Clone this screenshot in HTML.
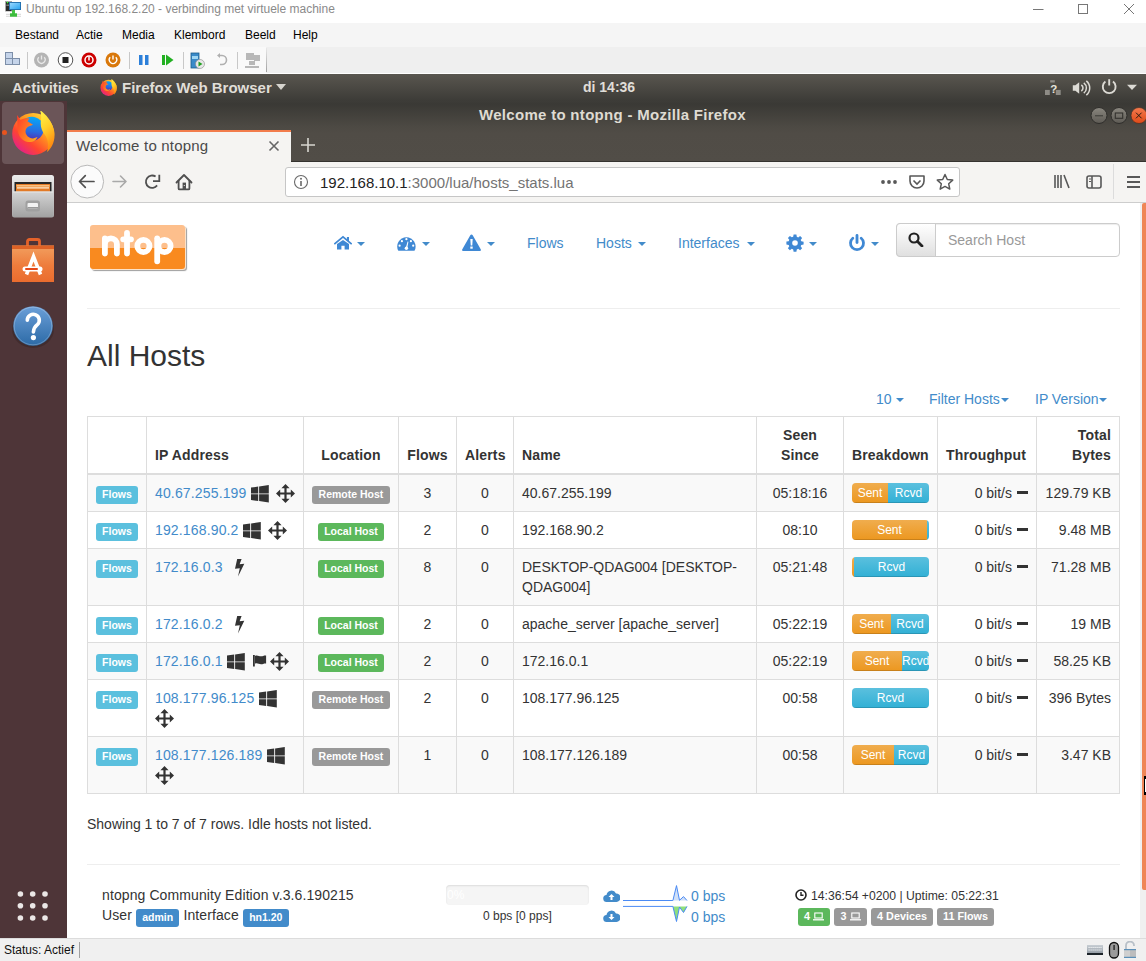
<!DOCTYPE html>
<html><head><meta charset="utf-8">
<style>
*{box-sizing:border-box;margin:0;padding:0}
html,body{width:1146px;height:961px;overflow:hidden;background:#fff;font-family:"Liberation Sans",sans-serif;position:relative}
.a{position:absolute}
.menu{top:28px;font-size:12px;line-height:15px;color:#000;white-space:nowrap}
.ub{font-size:15px;font-weight:bold;line-height:17px;color:#e0ded8;white-space:nowrap}
.lnk{font-size:14px;line-height:20px;color:#428bca;white-space:nowrap}
.nc path{fill:#428bca}
.hl{height:1px;background:#ddd}
.vl{width:1px;background:#ddd}
.td{padding:8px;font-size:14px;line-height:20px;color:#333;white-space:nowrap}
.thb{position:absolute;bottom:8px;left:8px;right:8px;letter-spacing:.15px}
.ip{color:#428bca;letter-spacing:.15px}
.ic{vertical-align:-3px}
.flw{display:inline-block;margin-top:3px;margin-left:0;width:42px;height:18px;line-height:17px;padding-bottom:1px;border-radius:3px;background:#5bc0de;color:#fff;font-weight:bold;font-size:10.5px;text-align:center;vertical-align:top}
.lbl{display:inline-block;margin-top:3px;height:18px;line-height:17px;padding-bottom:1px!important;padding:0 6.3px;border-radius:3px;color:#fff;font-weight:bold;font-size:10.5px;vertical-align:top}
.bar{position:absolute;left:8px;top:8px;width:77px;height:20px;border-radius:4px;overflow:hidden;display:flex;background:#f5f5f5}
.seg{height:20px;line-height:20px;font-size:12px;color:#fff;text-align:center;overflow:hidden;box-shadow:inset 0 -1px 0 rgba(0,0,0,.15)}
.sent{background:linear-gradient(#f0ad4e,#ec971f)}
.rcvd{background:linear-gradient(#5bc0de,#31b0d5)}
.minus{display:inline-block;width:11px;height:3px;background:#333;margin-left:5px;vertical-align:4px}
.ft{font-size:14px;line-height:20px;color:#333;white-space:nowrap;letter-spacing:.1px}
.bdg{display:inline-block;height:18px;line-height:16px;padding-bottom:2px!important;padding:0 6.3px;border-radius:3px;color:#fff;font-weight:bold;font-size:10.5px;vertical-align:-1px;letter-spacing:0}
.bdg2{height:18px;line-height:16px;border-radius:3px;color:#fff;font-weight:bold;font-size:10.8px;text-align:center;white-space:nowrap}

</style></head><body>
<!-- Hyper-V title -->
<div class="a" style="left:0;top:0;width:1146px;height:23px;background:#fff"></div>
<svg class="a" style="left:0;top:0" width="24" height="22" viewBox="0 0 24 22">
 <defs><linearGradient id="hvm" x1="0" y1="0" x2="1" y2="1"><stop offset="0" stop-color="#9ad8ff"/><stop offset="1" stop-color="#2aa4f0"/></linearGradient></defs>
 <rect x="5" y="1" width="7" height="10.5" fill="#a8a8a8"/><rect x="6" y="2" width="5.5" height="9" fill="#2c2c2c"/><rect x="6.3" y="4.5" width="4" height="1.5" fill="#777"/><circle cx="7.5" cy="2.6" r=".8" fill="#3f3"/>
 <rect x="9" y="2" width="12" height="8" fill="#1f6cab"/><rect x="9.9" y="2.9" width="10.2" height="6.2" fill="url(#hvm)"/>
 <rect x="6" y="13.8" width="15" height=".9" fill="#d0d0d0"/><rect x="6" y="15.8" width="15" height=".9" fill="#d0d0d0"/>
 <rect x="12" y="10" width="3" height="4" fill="#44c444"/><rect x="10" y="13.3" width="7" height="3.4" fill="#3cbc3c"/>
</svg>
<div class="a" style="left:26px;top:2px;font-size:12px;color:#8a8a8a;line-height:15px;white-space:nowrap">Ubuntu op 192.168.2.20 - verbinding met virtuele machine</div>
<svg class="a" style="left:1020px;top:0" width="126" height="22" viewBox="0 0 126 22">
 <path d="M13 9.5H23.5" stroke="#777" stroke-width="1"/>
 <rect x="58.5" y="4.5" width="9" height="9" fill="none" stroke="#777"/>
 <path d="M104 4L114 14M114 4L104 14" stroke="#777" stroke-width="1"/>
</svg>
<!-- menu -->
<div class="a" style="left:0;top:23px;width:1146px;height:24px;background:#f5f5f5"></div>
<div class="a menu" style="left:15px">Bestand</div>
<div class="a menu" style="left:76px">Actie</div>
<div class="a menu" style="left:122px">Media</div>
<div class="a menu" style="left:174px">Klembord</div>
<div class="a menu" style="left:245px">Beeld</div>
<div class="a menu" style="left:293px">Help</div>
<!-- toolbar -->
<div class="a" style="left:0;top:47px;width:1146px;height:27px;background:#efefef;border-bottom:1px solid #fff"></div>
<div class="a" style="left:0;top:47px;width:266px;height:26px;background:#f9f9f9"></div>
<div class="a" style="left:266px;top:48px;width:1px;height:24px;background:linear-gradient(#e8e8e8,#a0a0a0)"></div>
<svg class="a" style="left:0;top:47px" width="267" height="26" viewBox="0 0 267 26">
 <g fill="#c5d4ea" stroke="#7c8ea8" stroke-width="1">
  <rect x="5.5" y="5.5" width="7" height="6"/><rect x="5.5" y="11.5" width="7" height="6"/><rect x="12.5" y="11.5" width="7" height="6"/>
 </g>
 <path d="M27.5 5v17M129.5 5v17M183.5 5v17M237.5 5v17" stroke="#c8c8c8"/>
 <circle cx="41.5" cy="13" r="7.5" fill="#b4b4b4"/><path d="M41.5 8.5v4" stroke="#e8e8e8" stroke-width="1.3"/><path d="M38.8 10.3a3.6 3.6 0 1 0 5.4 0" fill="none" stroke="#e8e8e8" stroke-width="1.3"/>
 <circle cx="65.5" cy="13" r="7.3" fill="#fff" stroke="#555" stroke-width="1"/><rect x="62.5" y="10" width="6" height="6" fill="#222"/>
 <circle cx="89" cy="13" r="7.5" fill="#c00"/><circle cx="89" cy="13" r="4" fill="none" stroke="#fff" stroke-width="1.5"/><path d="M89 9.5v4" stroke="#fff" stroke-width="1.5"/>
 <circle cx="113" cy="13" r="7.5" fill="#d9780b"/><path d="M113 8.5v4" stroke="#fff" stroke-width="1.4"/><path d="M110.2 10.3a3.7 3.7 0 1 0 5.6 0" fill="none" stroke="#fff" stroke-width="1.4"/>
 <rect x="139" y="8" width="3.5" height="10" fill="#2b7fd9"/><rect x="145" y="8" width="3.5" height="10" fill="#2b7fd9"/>
 <rect x="162" y="8" width="3" height="10" fill="#22b022"/><path d="M166 7.5l7.5 5.5-7.5 5.5z" fill="#22b022"/>
 <rect x="191" y="6" width="8" height="15" fill="#3a8ac8" stroke="#1c5c8c" stroke-width=".8"/><rect x="192" y="9" width="6" height="3" fill="#9fd6f3"/><circle cx="200" cy="17" r="4.5" fill="#e8e8e8" stroke="#888" stroke-width=".6"/><path d="M198.5 14.5l4 2.5-4 2.5z" fill="#22a022"/>
 <path d="M219 8.5h3a4 4 0 0 1 0 9h-2" fill="none" stroke="#b0b0b0" stroke-width="1.6"/><path d="M217 8.5l3-2.5v5z" fill="#b0b0b0"/>
 <g fill="#b8b8b8"><rect x="246" y="6" width="8" height="7"/><rect x="254" y="8" width="6" height="6"/><rect x="249" y="14" width="6" height="4"/><rect x="245" y="19" width="14" height="2"/></g>
</svg>
<!-- ubuntu top bar -->
<div class="a" style="left:0;top:74px;width:1146px;height:27px;background:linear-gradient(#59564f,#3c3b37)"></div>
<div class="a ub" style="left:12px;top:79px">Activities</div>
<svg class="a" style="left:100px;top:79px" width="17" height="17" viewBox="0 0 44 44"><use href="#ffx"/></svg>
<div class="a ub" style="left:122px;top:79px">Firefox Web Browser</div>
<svg class="a" style="left:276px;top:84px" width="10" height="6"><path d="M0 0h10l-5 6z" fill="#d6d4ce"/></svg>
<div class="a ub" style="left:583px;top:79px;font-size:14px">di 14:36</div>
<svg class="a" style="left:1040px;top:77px" width="106" height="20" viewBox="0 0 106 20">
 <g fill="#8e8c86"><rect x="5" y="12.9" width="4.8" height="5.1"/><rect x="15.8" y="12.9" width="4.9" height="5.1"/><rect x="10.2" y="3.2" width="4.6" height="2.3"/></g>
 <text x="10.3" y="15.6" font-family="Liberation Sans" font-weight="bold" font-size="11.5" fill="#e6e4de">?</text>
 <path d="M32.8 8.3h2.6l3.8-3v11.4l-3.8-3h-2.6z" fill="#dcdad4"/><path d="M41.3 8a3.5 3.5 0 0 1 0 6M43.8 5.8a6.5 6.5 0 0 1 0 10.4M46.3 3.8a9.3 9.3 0 0 1 0 14.4" fill="none" stroke="#dcdad4" stroke-width="1.5"/>
 <path d="M69.2 2.2v6.3" stroke="#dcdad4" stroke-width="1.9"/><path d="M65.4 4.6a6.4 6.4 0 1 0 7.6 0" fill="none" stroke="#dcdad4" stroke-width="1.9"/>
 <path d="M87 7.8h10l-5 5.1z" fill="#dcdad4"/>
</svg>
<!-- firefox title -->
<div class="a" style="left:67px;top:101px;width:1079px;height:61px;background:linear-gradient(#3d3c38 0,#3a3935 3px,#4c4943 25px,#504c46 32px,#514d47 61px)"></div>
<div class="a" style="left:291px;top:161px;width:855px;height:1px;background:#35332f"></div>
<div class="a ub" style="left:479px;top:106px;color:#dfdbd2;letter-spacing:.3px">Welcome to ntopng - Mozilla Firefox</div>
<svg class="a" style="left:1085px;top:104px" width="61" height="22" viewBox="0 0 61 22">
 <defs><linearGradient id="gb" x1="0" y1="0" x2="0" y2="1"><stop offset="0" stop-color="#8a877f"/><stop offset="1" stop-color="#5d5a54"/></linearGradient>
 <linearGradient id="go" x1="0" y1="0" x2="0" y2="1"><stop offset="0" stop-color="#f47a4e"/><stop offset="1" stop-color="#de4a18"/></linearGradient></defs>
 <circle cx="14" cy="11.5" r="8" fill="url(#gb)" stroke="#2e2d2a" stroke-width="1"/><path d="M10 11.8h8" stroke="#3a3935" stroke-width="1"/>
 <circle cx="34" cy="11.5" r="8" fill="url(#gb)" stroke="#2e2d2a" stroke-width="1"/><rect x="30.3" y="9" width="7.4" height="5.3" fill="none" stroke="#33322e" stroke-width="1.1"/>
 <circle cx="54" cy="11.5" r="8" fill="url(#go)" stroke="#3a2a20" stroke-width=".6"/><path d="M51 8.7l5.6 5.6M56.6 8.7l-5.6 5.6" stroke="#2a1a10" stroke-width="1"/>
</svg>
<!-- tab -->
<div class="a" style="left:67px;top:130px;width:224px;height:33px;background:#f5f4f2;border-top:2px solid #f27c4b"></div>
<div class="a" style="left:76px;top:137px;font-size:15px;line-height:17px;color:#4a4a4a;letter-spacing:.2px;white-space:nowrap">Welcome to ntopng</div>
<svg class="a" style="left:268px;top:140px" width="12" height="12"><path d="M1.5 1.5l9 9M10.5 1.5l-9 9" stroke="#666" stroke-width="1.6"/></svg>
<svg class="a" style="left:300px;top:137px" width="16" height="16"><path d="M8 1v14M1 8h14" stroke="#d8d6d0" stroke-width="1.6"/></svg>
<!-- navbar -->
<div class="a" style="left:67px;top:162px;width:1079px;height:41px;background:#f5f4f2;border-bottom:1px solid #cdcdcd"></div>
<svg class="a" style="left:67px;top:162px" width="1079" height="40" viewBox="0 0 1079 40">
 <circle cx="20.2" cy="19.6" r="16.4" fill="#fbfbfb" stroke="#b9b9b9"/>
 <path d="M12.5 19.5h14.5M12.5 19.5l5.8-5.8M12.5 19.5l5.8 5.8" fill="none" stroke="#505050" stroke-width="1.7" stroke-linecap="round"/>
 <path d="M46 19.5h13M59 19.5l-5.5-5.5M59 19.5l-5.5 5.5" fill="none" stroke="#a9a9a9" stroke-width="1.6" stroke-linecap="round"/>
 <path d="M90.1 23.4A6.2 6.2 0 1 1 88.6 14.6" fill="none" stroke="#4f4f4f" stroke-width="1.8"/><path d="M92.3 12.8v6.3h-6.3" fill="none" stroke="#4f4f4f" stroke-width="1.8"/>
 <path d="M109.5 20.5L117 13L124.5 20.5" fill="none" stroke="#4f4f4f" stroke-width="1.8" stroke-linecap="round" stroke-linejoin="round"/><path d="M111.6 18.5V26.4a1 1 0 0 0 1 1h8.8a1 1 0 0 0 1-1V18.5" fill="none" stroke="#4f4f4f" stroke-width="1.8"/><rect x="115.6" y="20.6" width="3.4" height="6.8" fill="#4f4f4f"/><circle cx="117.3" cy="23.5" r=".6" fill="#f5f4f2"/>
</svg>
<div class="a" style="left:285px;top:167px;width:675px;height:30px;background:#fff;border:1px solid #c6c6c6;border-radius:3px"></div>
<svg class="a" style="left:293px;top:174px" width="16" height="16"><circle cx="8" cy="8" r="6.5" fill="none" stroke="#6a6a6a" stroke-width="1.1"/><rect x="7.2" y="7" width="1.6" height="5" fill="#6a6a6a"/><circle cx="8" cy="4.8" r="1" fill="#6a6a6a"/></svg>
<div class="a" style="left:320px;top:174px;font-size:15px;line-height:17px;color:#737373;white-space:nowrap"><span style="color:#222">192.168.10.1</span>:3000/lua/hosts_stats.lua</div>
<svg class="a" style="left:878px;top:172px" width="80" height="20" viewBox="0 0 80 20">
 <circle cx="5" cy="10" r="1.9" fill="#585858"/><circle cx="11" cy="10" r="1.9" fill="#585858"/><circle cx="17" cy="10" r="1.9" fill="#585858"/>
 <path d="M32 4h14v5a7 7 0 0 1-14 0z" fill="none" stroke="#585858" stroke-width="1.6" stroke-linejoin="round"/><path d="M35.5 8.5l3.5 3.5 3.5-3.5" fill="none" stroke="#585858" stroke-width="1.6"/>
 <path d="M67 2.5l2.3 5 5.4.6-4 3.7 1.1 5.3-4.8-2.7-4.8 2.7 1.1-5.3-4-3.7 5.4-.6z" fill="none" stroke="#585858" stroke-width="1.5" stroke-linejoin="round"/>
</svg>
<svg class="a" style="left:1052px;top:172px" width="94" height="20" viewBox="0 0 94 20">
 <path d="M3 3v13M6 3v13M9 3v13M12 3l5 13" stroke="#585858" stroke-width="1.6"/>
 <rect x="35" y="4" width="14" height="12" rx="2" fill="none" stroke="#585858" stroke-width="1.6"/><path d="M40 4v12" stroke="#585858" stroke-width="1.6"/><path d="M37 7h2M37 9.5h2" stroke="#585858" stroke-width="1"/>
 <path d="M75 5h13M75 10h13M75 15h13" stroke="#585858" stroke-width="1.8"/>
</svg>
<div class="a" style="left:1113px;top:164px;width:1px;height:35px;background:#dcdcdc"></div>

<svg width="0" height="0" style="position:absolute">
 <defs>
  <linearGradient id="ffo" x1="0.85" y1="0.1" x2="0.15" y2="0.9"><stop offset="0" stop-color="#ffd83a"/><stop offset="0.35" stop-color="#ff9a1e"/><stop offset="0.7" stop-color="#ff4530"/><stop offset="1" stop-color="#e3208a"/></linearGradient>
  <linearGradient id="ffb" x1="0.5" y1="0" x2="0.4" y2="1"><stop offset="0" stop-color="#05a9f8"/><stop offset="0.6" stop-color="#2a6ce0"/><stop offset="1" stop-color="#5528b0"/></linearGradient>
  <linearGradient id="ffy" x1="0" y1="0" x2="0.3" y2="1"><stop offset="0" stop-color="#fff44a"/><stop offset="0.5" stop-color="#ffd02a"/><stop offset="1" stop-color="#ff8a10"/></linearGradient>
  <linearGradient id="ffr" x1="0" y1="0" x2="1" y2="0.6"><stop offset="0" stop-color="#ff3a2a"/><stop offset="1" stop-color="#ffa020"/></linearGradient>
  <symbol id="ffx" viewBox="0 0 44 44">
   <circle cx="22.2" cy="22.9" r="21" fill="url(#ffo)"/>
   <circle cx="20.8" cy="17.8" r="12" fill="url(#ffb)"/>
   <path d="M6 4L9.5 9C12 7.5 15 7 18.5 7.5L16.5 10.2L22 13.7L17 15.8C15.5 17 14.5 18.5 14.5 20.5C14.5 24 17.5 27 22 27.5L26.5 26C25.5 29.5 21.5 31.5 17 31C11 30 7 25 6.5 18C6.3 12 6.5 8 6 4Z" fill="url(#ffr)"/>
   <path d="M29 -1C34 3 40 8 43 19C45 29 41 37 36 41C38 34 37 28 34 24C30.5 20 29 14 30 9C30.5 5 30 2 29 -1Z" fill="url(#ffy)"/>
  </symbol>
 </defs>
</svg>
<div class="a" style="left:0;top:101px;width:67px;height:837px;background:#4e3538"></div>
<div class="a" style="left:2px;top:102px;width:62px;height:62px;background:#6b5558;border-radius:4px"></div>
<div class="a" style="left:2px;top:130px;width:5px;height:5px;border-radius:50%;background:#e9541e"></div>
<svg class="a" style="left:11px;top:111px" width="44" height="44" viewBox="0 0 44 44"><use href="#ffx"/></svg>
<svg class="a" style="left:11px;top:174px" width="44" height="46" viewBox="0 0 44 46">
 <defs><linearGradient id="fc" x1="0" y1="0" x2="0" y2="1"><stop offset="0" stop-color="#ececec"/><stop offset="1" stop-color="#a8a8a8"/></linearGradient>
 <linearGradient id="fd" x1="0" y1="0" x2="0" y2="1"><stop offset="0" stop-color="#d4d4d4"/><stop offset="1" stop-color="#a2a2a2"/></linearGradient></defs>
 <rect x="1" y="1" width="42" height="42.5" rx="2.5" fill="url(#fc)"/>
 <rect x="3.5" y="8" width="37" height="10" fill="#262626"/>
 <rect x="5" y="10" width="34" height="8" fill="#e27a26"/><rect x="5.5" y="11" width="33" height="1.6" fill="#f8c080"/><rect x="6" y="13.3" width="32" height="1.2" fill="#fff4dc"/>
 <rect x="2" y="17.5" width="40" height="25.5" rx="1" fill="url(#fd)"/><rect x="2" y="17.5" width="40" height="1" fill="#e6e6e6"/>
 <rect x="14.5" y="26.5" width="14.5" height="11" rx="2.5" fill="#a0a0a0"/><rect x="16.5" y="29" width="10.5" height="5.5" rx="1" fill="#f2f2f2"/><rect x="16.5" y="33" width="10.5" height="1.5" fill="#999"/>
</svg>
<svg class="a" style="left:11px;top:238px" width="44" height="46" viewBox="0 0 44 46">
 <defs><linearGradient id="bg1" x1="0" y1="0" x2="0" y2="1"><stop offset="0" stop-color="#f2a060"/><stop offset="0.55" stop-color="#ee7c3c"/><stop offset="1" stop-color="#ea6c2e"/></linearGradient></defs>
 <path d="M16.5 12V3.5a2 2 0 0 1 2-2h8a2 2 0 0 1 2 2V12" fill="none" stroke="#e4622a" stroke-width="2.8"/>
 <rect x="1" y="7.5" width="42" height="36.5" fill="url(#bg1)"/>
 <rect x="1" y="7.5" width="42" height="3.5" fill="#dd6226"/>
 <path d="M15.5 36.5L22.5 18.5L29.5 36.5" fill="none" stroke="#fff" stroke-width="3.6" stroke-linejoin="miter"/>
 <rect x="11.5" y="28.5" width="20" height="5" rx="2.5" fill="#fff"/><rect x="14" y="30" width="13" height="2" rx="1" fill="#e64a1a"/>
</svg>
<svg class="a" style="left:10px;top:302px" width="46" height="50" viewBox="0 0 46 50">
 <defs><linearGradient id="hg" x1="0" y1="0" x2="0" y2="1"><stop offset="0" stop-color="#6b9fd8"/><stop offset="1" stop-color="#2c6aa6"/></linearGradient></defs>
 <ellipse cx="23" cy="27" rx="21" ry="19" fill="#2a1c1e" opacity=".35"/>
 <circle cx="23" cy="24" r="19.8" fill="url(#hg)"/>
 <circle cx="23" cy="24" r="18.8" fill="none" stroke="#fff" stroke-opacity=".3" stroke-width=".8"/>
 <path d="M17.3 18.2A6 5.9 0 1 1 27.3 22.6C24.9 24.5 23.6 26 23.4 30" fill="none" stroke="#fff" stroke-width="3.6" stroke-linecap="round"/>
 <circle cx="23.4" cy="35.6" r="2.6" fill="#fff"/>
</svg>
<svg class="a" style="left:17px;top:891px" width="32" height="32" viewBox="0 0 32 32"><g fill="#ebe7e6"><circle cx="3.4" cy="3" r="2.8"/><circle cx="15.7" cy="3" r="2.8"/><circle cx="28" cy="3" r="2.8"/><circle cx="3.4" cy="14.8" r="2.8"/><circle cx="15.7" cy="14.8" r="2.8"/><circle cx="28" cy="14.8" r="2.8"/><circle cx="3.4" cy="27" r="2.8"/><circle cx="15.7" cy="27" r="2.8"/><circle cx="28" cy="27" r="2.8"/></g></svg>
<!-- status bar -->
<div class="a" style="left:0;top:938px;width:1146px;height:23px;background:#f0f0f0;border-top:1px solid #dcdcdc"></div>
<div class="a" style="left:4px;top:943px;font-size:12px;color:#111;white-space:nowrap">Status: Actief</div>
<div class="a" style="left:79px;top:942px;width:1px;height:16px;background:#a0a0a0"></div>
<svg class="a" style="left:1085px;top:941px" width="61" height="18" viewBox="0 0 61 18">
 <defs><linearGradient id="kb" x1="0" y1="0" x2="0" y2="1"><stop offset="0" stop-color="#c8ced4"/><stop offset="1" stop-color="#8a939c"/></linearGradient></defs>
 <rect x="2" y="4" width="16" height="10" fill="url(#kb)"/><rect x="2" y="12" width="16" height="2" fill="#1c2328"/>
 <path d="M3.5 6.5h13M3.5 9h13" stroke="#f4f6f8" stroke-width="1" stroke-dasharray="1.2 .8"/>
 <rect x="24.5" y="1.5" width="9" height="15.5" rx="4.5" fill="#9a9a9a" stroke="#111" stroke-width="1.3"/><rect x="28.3" y="4" width="1.6" height="5" fill="#333"/>
 <path d="M41 8V4.5a4 4 0 0 1 8 0V5" fill="none" stroke="#b8c0c8" stroke-width="1.8"/>
 <rect x="39" y="8.5" width="12" height="8" fill="#cfcfcf"/><rect x="45" y="8.5" width="6" height="8" fill="#bdbdbd"/><rect x="39" y="8" width="12" height="1.2" fill="#5b8fb8"/><rect x="39" y="15.8" width="12" height="1.2" fill="#5b8fb8"/>
</svg>

<!-- content bg -->
<div class="a" style="left:67px;top:203px;width:1079px;height:735px;background:#fff"></div>
<div class="a" style="left:1140px;top:203px;width:6px;height:735px;background:#f0f0f0"></div>
<div class="a" style="left:1142px;top:203px;width:4px;height:687px;background:#ef8656;border-radius:2px 0 0 2px"></div>
<!-- ntop logo -->
<div class="a" style="left:90px;top:225px;width:95px;height:44px;border-radius:3px;background:linear-gradient(#fdbf8c 0,#fdbf8c 23px,#f98a1f 23px,#f98a1f);box-shadow:1px 1px 0 #fce2c8,2px 2px 1px rgba(60,60,60,.5)"></div>
<svg class="a" style="left:100px;top:228px" width="78" height="38" viewBox="0 0 78 38">
 <g fill="none" stroke="#fff" stroke-width="5.8" stroke-linecap="round" stroke-linejoin="round">
  <path d="M4.9 10.3V25.5M4.9 16.3A6 6 0 0 1 16.9 16.3V25.5"/>
  <path d="M27 4.9V25.5M23.2 11.3H31"/>
  <circle cx="43.4" cy="18" r="6.1"/>
  <path d="M57.2 10.3V33.3"/><circle cx="64.5" cy="18" r="6.1"/>
 </g>
</svg>
<!-- nav -->
<svg class="a" style="left:334px;top:235px" width="18" height="16" viewBox="0 0 18 16"><path d="M0.9 8.6L9 1.9L17.1 8.6" fill="none" stroke="#3f88d4" stroke-width="1.8" stroke-linecap="round"/><rect x="12.9" y="2" width="2.1" height="4" fill="#3f88d4"/><path d="M3 9L9 4.9L15 9V14.6H10.6V10.8H7.4V14.6H3Z" fill="#3f88d4"/></svg>
<svg class="a nc" style="left:357px;top:242px" width="8" height="4"><path d="M0 0h8l-4 4z"/></svg>
<svg class="a" style="left:397px;top:237px" width="20" height="14" viewBox="0 0 20 14"><path d="M1.3 13.8A9.2 9.2 0 1 1 17.5 13.8Z" fill="#3f88d4"/><g fill="#fff"><circle cx="4.9" cy="4.2" r="1.1"/><circle cx="9.4" cy="2.2" r="1.1"/><circle cx="13.9" cy="4.2" r="1.1"/><circle cx="2.6" cy="8.7" r="1.1"/><circle cx="16.2" cy="8.7" r="1.1"/><circle cx="9.4" cy="11.3" r="1.7"/><path d="M8.7 11.2L10.6 4.6L11.4 4.8L10.2 11.5Z"/></g></svg>
<svg class="a nc" style="left:422px;top:242px" width="8" height="4"><path d="M0 0h8l-4 4z"/></svg>
<svg class="a" style="left:462px;top:234px" width="19" height="17" viewBox="0 0 19 17"><path d="M9.5 .5c.5 0 .9.3 1.2.8l8 14c.5.8-.1 1.7-1 1.7H1.3c-.9 0-1.5-.9-1-1.7l8-14c.3-.5.7-.8 1.2-.8z" fill="#3f88d4"/><path d="M8.3 5h2.4l-.4 6.5H8.7z" fill="#fff"/><rect x="8.3" y="12.5" width="2.4" height="2.2" fill="#fff"/></svg>
<svg class="a nc" style="left:487px;top:242px" width="8" height="4"><path d="M0 0h8l-4 4z"/></svg>
<div class="a lnk" style="left:527px;top:233px">Flows</div>
<div class="a lnk" style="left:596px;top:233px">Hosts</div>
<svg class="a nc" style="left:638px;top:242px" width="8" height="4"><path d="M0 0h8l-4 4z"/></svg>
<div class="a lnk" style="left:678px;top:233px">Interfaces</div>
<svg class="a nc" style="left:747px;top:242px" width="8" height="4"><path d="M0 0h8l-4 4z"/></svg>
<svg class="a" style="left:786px;top:234px" width="18" height="18" viewBox="0 0 18 18"><path d="M7.6 .5h2.8l.4 2.3 1.4.6 1.9-1.4 2 2-1.4 1.9.6 1.4 2.3.4v2.8l-2.3.4-.6 1.4 1.4 1.9-2 2-1.9-1.4-1.4.6-.4 2.3H7.6l-.4-2.3-1.4-.6-1.9 1.4-2-2 1.4-1.9-.6-1.4-2.3-.4V7.6l2.3-.4.6-1.4-1.4-1.9 2-2 1.9 1.4 1.4-.6z" fill="#3f88d4"/><circle cx="9" cy="9" r="2.8" fill="#fff"/></svg>
<svg class="a nc" style="left:809px;top:242px" width="8" height="4"><path d="M0 0h8l-4 4z"/></svg>
<svg class="a" style="left:848px;top:234px" width="18" height="18" viewBox="0 0 18 18"><path d="M9 1.5v7" stroke="#3f88d4" stroke-width="2.8" stroke-linecap="round"/><path d="M4.8 4.2a6.5 6.5 0 1 0 8.4 0" fill="none" stroke="#3f88d4" stroke-width="2.8" stroke-linecap="round"/></svg>
<svg class="a nc" style="left:871px;top:242px" width="8" height="4"><path d="M0 0h8l-4 4z"/></svg>
<!-- search -->
<div class="a" style="left:896px;top:223px;width:224px;height:34px;border:1px solid #ccc;border-radius:4px;background:#fff;box-shadow:inset 0 1px 1px rgba(0,0,0,.075)"></div>
<div class="a" style="left:896px;top:223px;width:40px;height:34px;border:1px solid #ccc;border-radius:4px 0 0 4px;background:linear-gradient(#fff,#e0e0e0)"></div>
<svg class="a" style="left:908px;top:232px" width="16" height="15" viewBox="0 0 16 15"><circle cx="6" cy="6" r="4.5" fill="none" stroke="#222" stroke-width="2.2"/><path d="M9.5 9.5l4.5 4.5" stroke="#222" stroke-width="2.8" stroke-linecap="round"/></svg>
<div class="a" style="left:948px;top:232px;font-size:14px;color:#999;line-height:16px;white-space:nowrap">Search Host</div>
<!-- hr -->
<div class="a" style="left:87px;top:308px;width:1033px;height:1px;background:#eee"></div>
<div class="a" style="left:87px;top:338px;font-size:30px;color:#333;line-height:36px;white-space:nowrap">All Hosts</div>
<div class="a lnk" style="left:876px;top:389px">10</div>
<svg class="a nc" style="left:896px;top:398px" width="8" height="4"><path d="M0 0h8l-4 4z"/></svg>
<div class="a lnk" style="left:929px;top:389px">Filter Hosts</div>
<svg class="a nc" style="left:1001px;top:398px" width="8" height="4"><path d="M0 0h8l-4 4z"/></svg>
<div class="a lnk" style="left:1035px;top:389px">IP Version</div>
<svg class="a nc" style="left:1099px;top:398px" width="8" height="4"><path d="M0 0h8l-4 4z"/></svg>

<div class="a" style="left:87px;top:475px;width:1033px;height:36px;background:#f9f9f9"></div>
<div class="a" style="left:87px;top:549px;width:1033px;height:56px;background:#f9f9f9"></div>
<div class="a" style="left:87px;top:643px;width:1033px;height:36px;background:#f9f9f9"></div>
<div class="a" style="left:87px;top:737px;width:1033px;height:56px;background:#f9f9f9"></div>
<div class="a hl" style="left:87px;top:416px;width:1033px"></div>
<div class="a hl" style="left:87px;top:473px;width:1033px;height:2px"></div>
<div class="a hl" style="left:87px;top:511px;width:1033px"></div>
<div class="a hl" style="left:87px;top:548px;width:1033px"></div>
<div class="a hl" style="left:87px;top:605px;width:1033px"></div>
<div class="a hl" style="left:87px;top:642px;width:1033px"></div>
<div class="a hl" style="left:87px;top:679px;width:1033px"></div>
<div class="a hl" style="left:87px;top:736px;width:1033px"></div>
<div class="a hl" style="left:87px;top:793px;width:1033px"></div>
<div class="a vl" style="left:87px;top:416px;height:378px"></div>
<div class="a vl" style="left:146px;top:416px;height:378px"></div>
<div class="a vl" style="left:303px;top:416px;height:378px"></div>
<div class="a vl" style="left:398px;top:416px;height:378px"></div>
<div class="a vl" style="left:456px;top:416px;height:378px"></div>
<div class="a vl" style="left:513px;top:416px;height:378px"></div>
<div class="a vl" style="left:756px;top:416px;height:378px"></div>
<div class="a vl" style="left:843px;top:416px;height:378px"></div>
<div class="a vl" style="left:937px;top:416px;height:378px"></div>
<div class="a vl" style="left:1036px;top:416px;height:378px"></div>
<div class="a vl" style="left:1119px;top:416px;height:378px"></div>
<div class="a td" style="left:88px;top:417px;width:58px;height:56px;text-align:left;font-weight:bold"><div class="thb"></div></div>
<div class="a td" style="left:147px;top:417px;width:156px;height:56px;text-align:left;font-weight:bold"><div class="thb">IP Address</div></div>
<div class="a td" style="left:304px;top:417px;width:94px;height:56px;text-align:center;font-weight:bold"><div class="thb">Location</div></div>
<div class="a td" style="left:399px;top:417px;width:57px;height:56px;text-align:center;font-weight:bold"><div class="thb">Flows</div></div>
<div class="a td" style="left:457px;top:417px;width:56px;height:56px;text-align:center;font-weight:bold"><div class="thb">Alerts</div></div>
<div class="a td" style="left:514px;top:417px;width:242px;height:56px;text-align:left;font-weight:bold"><div class="thb">Name</div></div>
<div class="a td" style="left:757px;top:417px;width:86px;height:56px;text-align:center;font-weight:bold"><div class="thb">Seen<br>Since</div></div>
<div class="a td" style="left:844px;top:417px;width:93px;height:56px;text-align:left;font-weight:bold"><div class="thb">Breakdown</div></div>
<div class="a td" style="left:938px;top:417px;width:98px;height:56px;text-align:left;font-weight:bold"><div class="thb">Throughput</div></div>
<div class="a td" style="left:1037px;top:417px;width:82px;height:56px;text-align:right;font-weight:bold"><div class="thb">Total<br>Bytes</div></div>
<div class="a td" style="left:88px;top:475px;width:58px;height:36px;text-align:left;"><span class="flw">Flows</span></div>
<div class="a td" style="left:147px;top:475px;width:156px;height:36px;text-align:left;"><span class="ip">40.67.255.199</span></div>
<div class="a td" style="left:304px;top:475px;width:94px;height:36px;text-align:center;"><span class="lbl" style="background:#999">Remote Host</span></div>
<div class="a td" style="left:399px;top:475px;width:57px;height:36px;text-align:center;">3</div>
<div class="a td" style="left:457px;top:475px;width:56px;height:36px;text-align:center;">0</div>
<div class="a td" style="left:514px;top:475px;width:242px;height:36px;text-align:left;">40.67.255.199</div>
<div class="a td" style="left:757px;top:475px;width:86px;height:36px;text-align:center;">05:18:16</div>
<div class="a td" style="left:844px;top:475px;width:93px;height:36px;text-align:left;"><div class="bar"><div class="seg sent" style="width:36px">Sent</div><div class="seg rcvd" style="width:41px">Rcvd</div></div></div>
<div class="a td" style="left:938px;top:475px;width:98px;height:36px;text-align:right;">0 bit/s<span class="minus"></span></div>
<div class="a td" style="left:1037px;top:475px;width:82px;height:36px;text-align:right;">129.79 KB</div>
<div class="a td" style="left:88px;top:512px;width:58px;height:36px;text-align:left;"><span class="flw">Flows</span></div>
<div class="a td" style="left:147px;top:512px;width:156px;height:36px;text-align:left;"><span class="ip">192.168.90.2</span></div>
<div class="a td" style="left:304px;top:512px;width:94px;height:36px;text-align:center;"><span class="lbl" style="background:#5cb85c">Local Host</span></div>
<div class="a td" style="left:399px;top:512px;width:57px;height:36px;text-align:center;">2</div>
<div class="a td" style="left:457px;top:512px;width:56px;height:36px;text-align:center;">0</div>
<div class="a td" style="left:514px;top:512px;width:242px;height:36px;text-align:left;">192.168.90.2</div>
<div class="a td" style="left:757px;top:512px;width:86px;height:36px;text-align:center;">08:10</div>
<div class="a td" style="left:844px;top:512px;width:93px;height:36px;text-align:left;"><div class="bar"><div class="seg sent" style="width:75px">Sent</div><div class="seg rcvd" style="width:2px"></div></div></div>
<div class="a td" style="left:938px;top:512px;width:98px;height:36px;text-align:right;">0 bit/s<span class="minus"></span></div>
<div class="a td" style="left:1037px;top:512px;width:82px;height:36px;text-align:right;">9.48 MB</div>
<div class="a td" style="left:88px;top:549px;width:58px;height:56px;text-align:left;"><span class="flw">Flows</span></div>
<div class="a td" style="left:147px;top:549px;width:156px;height:56px;text-align:left;"><span class="ip">172.16.0.3</span></div>
<div class="a td" style="left:304px;top:549px;width:94px;height:56px;text-align:center;"><span class="lbl" style="background:#5cb85c">Local Host</span></div>
<div class="a td" style="left:399px;top:549px;width:57px;height:56px;text-align:center;">8</div>
<div class="a td" style="left:457px;top:549px;width:56px;height:56px;text-align:center;">0</div>
<div class="a td" style="left:514px;top:549px;width:242px;height:56px;text-align:left;">DESKTOP-QDAG004 [DESKTOP-<br>QDAG004]</div>
<div class="a td" style="left:757px;top:549px;width:86px;height:56px;text-align:center;">05:21:48</div>
<div class="a td" style="left:844px;top:549px;width:93px;height:56px;text-align:left;"><div class="bar"><div class="seg sent" style="width:2px"></div><div class="seg rcvd" style="width:75px">Rcvd</div></div></div>
<div class="a td" style="left:938px;top:549px;width:98px;height:56px;text-align:right;">0 bit/s<span class="minus"></span></div>
<div class="a td" style="left:1037px;top:549px;width:82px;height:56px;text-align:right;">71.28 MB</div>
<div class="a td" style="left:88px;top:606px;width:58px;height:36px;text-align:left;"><span class="flw">Flows</span></div>
<div class="a td" style="left:147px;top:606px;width:156px;height:36px;text-align:left;"><span class="ip">172.16.0.2</span></div>
<div class="a td" style="left:304px;top:606px;width:94px;height:36px;text-align:center;"><span class="lbl" style="background:#5cb85c">Local Host</span></div>
<div class="a td" style="left:399px;top:606px;width:57px;height:36px;text-align:center;">2</div>
<div class="a td" style="left:457px;top:606px;width:56px;height:36px;text-align:center;">0</div>
<div class="a td" style="left:514px;top:606px;width:242px;height:36px;text-align:left;">apache_server [apache_server]</div>
<div class="a td" style="left:757px;top:606px;width:86px;height:36px;text-align:center;">05:22:19</div>
<div class="a td" style="left:844px;top:606px;width:93px;height:36px;text-align:left;"><div class="bar"><div class="seg sent" style="width:39px">Sent</div><div class="seg rcvd" style="width:38px">Rcvd</div></div></div>
<div class="a td" style="left:938px;top:606px;width:98px;height:36px;text-align:right;">0 bit/s<span class="minus"></span></div>
<div class="a td" style="left:1037px;top:606px;width:82px;height:36px;text-align:right;">19 MB</div>
<div class="a td" style="left:88px;top:643px;width:58px;height:36px;text-align:left;"><span class="flw">Flows</span></div>
<div class="a td" style="left:147px;top:643px;width:156px;height:36px;text-align:left;"><span class="ip">172.16.0.1</span></div>
<div class="a td" style="left:304px;top:643px;width:94px;height:36px;text-align:center;"><span class="lbl" style="background:#5cb85c">Local Host</span></div>
<div class="a td" style="left:399px;top:643px;width:57px;height:36px;text-align:center;">2</div>
<div class="a td" style="left:457px;top:643px;width:56px;height:36px;text-align:center;">0</div>
<div class="a td" style="left:514px;top:643px;width:242px;height:36px;text-align:left;">172.16.0.1</div>
<div class="a td" style="left:757px;top:643px;width:86px;height:36px;text-align:center;">05:22:19</div>
<div class="a td" style="left:844px;top:643px;width:93px;height:36px;text-align:left;"><div class="bar"><div class="seg sent" style="width:50px">Sent</div><div class="seg rcvd" style="width:27px">Rcvd</div></div></div>
<div class="a td" style="left:938px;top:643px;width:98px;height:36px;text-align:right;">0 bit/s<span class="minus"></span></div>
<div class="a td" style="left:1037px;top:643px;width:82px;height:36px;text-align:right;">58.25 KB</div>
<div class="a td" style="left:88px;top:680px;width:58px;height:56px;text-align:left;"><span class="flw">Flows</span></div>
<div class="a td" style="left:147px;top:680px;width:156px;height:56px;text-align:left;"><span class="ip">108.177.96.125</span></div>
<div class="a td" style="left:304px;top:680px;width:94px;height:56px;text-align:center;"><span class="lbl" style="background:#999">Remote Host</span></div>
<div class="a td" style="left:399px;top:680px;width:57px;height:56px;text-align:center;">2</div>
<div class="a td" style="left:457px;top:680px;width:56px;height:56px;text-align:center;">0</div>
<div class="a td" style="left:514px;top:680px;width:242px;height:56px;text-align:left;">108.177.96.125</div>
<div class="a td" style="left:757px;top:680px;width:86px;height:56px;text-align:center;">00:58</div>
<div class="a td" style="left:844px;top:680px;width:93px;height:56px;text-align:left;"><div class="bar"><div class="seg rcvd" style="width:77px">Rcvd</div></div></div>
<div class="a td" style="left:938px;top:680px;width:98px;height:56px;text-align:right;">0 bit/s<span class="minus"></span></div>
<div class="a td" style="left:1037px;top:680px;width:82px;height:56px;text-align:right;">396 Bytes</div>
<div class="a td" style="left:88px;top:737px;width:58px;height:56px;text-align:left;"><span class="flw">Flows</span></div>
<div class="a td" style="left:147px;top:737px;width:156px;height:56px;text-align:left;"><span class="ip">108.177.126.189</span></div>
<div class="a td" style="left:304px;top:737px;width:94px;height:56px;text-align:center;"><span class="lbl" style="background:#999">Remote Host</span></div>
<div class="a td" style="left:399px;top:737px;width:57px;height:56px;text-align:center;">1</div>
<div class="a td" style="left:457px;top:737px;width:56px;height:56px;text-align:center;">0</div>
<div class="a td" style="left:514px;top:737px;width:242px;height:56px;text-align:left;">108.177.126.189</div>
<div class="a td" style="left:757px;top:737px;width:86px;height:56px;text-align:center;">00:58</div>
<div class="a td" style="left:844px;top:737px;width:93px;height:56px;text-align:left;"><div class="bar"><div class="seg sent" style="width:42px">Sent</div><div class="seg rcvd" style="width:35px">Rcvd</div></div></div>
<div class="a td" style="left:938px;top:737px;width:98px;height:56px;text-align:right;">0 bit/s<span class="minus"></span></div>
<div class="a td" style="left:1037px;top:737px;width:82px;height:56px;text-align:right;">3.47 KB</div>
<svg class="a" style="left:251px;top:485px" width="18" height="18" viewBox="0 0 18 18"><path d="M0 2.6L7.2 1.6V8.4H0zM8.1 1.4L17.8 0V8.4H8.1zM0 9.2H7.2V16L0 15zM8.1 9.2H17.8V17.4L8.1 16.1z" fill="#333"/></svg><svg class="a" style="left:276px;top:484px" width="19" height="19" viewBox="0 0 19 19"><path d="M9.5 0L13.6 4.2H10.6V8.4H14.8V5.4L19 9.5L14.8 13.6V10.6H10.6V14.8H13.6L9.5 19L5.4 14.8H8.4V10.6H4.2V13.6L0 9.5L4.2 5.4V8.4H8.4V4.2H5.4z" fill="#333"/></svg>
<svg class="a" style="left:243px;top:522px" width="18" height="18" viewBox="0 0 18 18"><path d="M0 2.6L7.2 1.6V8.4H0zM8.1 1.4L17.8 0V8.4H8.1zM0 9.2H7.2V16L0 15zM8.1 9.2H17.8V17.4L8.1 16.1z" fill="#333"/></svg><svg class="a" style="left:268px;top:521px" width="19" height="19" viewBox="0 0 19 19"><path d="M9.5 0L13.6 4.2H10.6V8.4H14.8V5.4L19 9.5L14.8 13.6V10.6H10.6V14.8H13.6L9.5 19L5.4 14.8H8.4V10.6H4.2V13.6L0 9.5L4.2 5.4V8.4H8.4V4.2H5.4z" fill="#333"/></svg>
<svg class="a" style="left:235px;top:559px" width="10" height="18" viewBox="0 0 10 18"><path d="M2.2 0H6.6L4.6 5.2L9.3 4.8L3 17.5L4.8 9.3L0 9.7z" fill="#333"/></svg>
<svg class="a" style="left:235px;top:616px" width="10" height="18" viewBox="0 0 10 18"><path d="M2.2 0H6.6L4.6 5.2L9.3 4.8L3 17.5L4.8 9.3L0 9.7z" fill="#333"/></svg>
<svg class="a" style="left:227px;top:653px" width="18" height="18" viewBox="0 0 18 18"><path d="M0 2.6L7.2 1.6V8.4H0zM8.1 1.4L17.8 0V8.4H8.1zM0 9.2H7.2V16L0 15zM8.1 9.2H17.8V17.4L8.1 16.1z" fill="#333"/></svg><svg class="a" style="left:253px;top:655px" width="14" height="12" viewBox="0 0 14 12"><path d="M0 0H1.8V11.5H0z M2 1C4 -.3 6 1.3 8 1.3S11 .3 13.1 .6V8.6C11 8.3 10 9.3 8 9.3S4 7.7 2 8.7z" fill="#333"/></svg><svg class="a" style="left:270px;top:652px" width="19" height="19" viewBox="0 0 19 19"><path d="M9.5 0L13.6 4.2H10.6V8.4H14.8V5.4L19 9.5L14.8 13.6V10.6H10.6V14.8H13.6L9.5 19L5.4 14.8H8.4V10.6H4.2V13.6L0 9.5L4.2 5.4V8.4H8.4V4.2H5.4z" fill="#333"/></svg>
<svg class="a" style="left:259px;top:690px" width="18" height="18" viewBox="0 0 18 18"><path d="M0 2.6L7.2 1.6V8.4H0zM8.1 1.4L17.8 0V8.4H8.1zM0 9.2H7.2V16L0 15zM8.1 9.2H17.8V17.4L8.1 16.1z" fill="#333"/></svg><svg class="a" style="left:155px;top:709px" width="19" height="19" viewBox="0 0 19 19"><path d="M9.5 0L13.6 4.2H10.6V8.4H14.8V5.4L19 9.5L14.8 13.6V10.6H10.6V14.8H13.6L9.5 19L5.4 14.8H8.4V10.6H4.2V13.6L0 9.5L4.2 5.4V8.4H8.4V4.2H5.4z" fill="#333"/></svg>
<svg class="a" style="left:267px;top:747px" width="18" height="18" viewBox="0 0 18 18"><path d="M0 2.6L7.2 1.6V8.4H0zM8.1 1.4L17.8 0V8.4H8.1zM0 9.2H7.2V16L0 15zM8.1 9.2H17.8V17.4L8.1 16.1z" fill="#333"/></svg><svg class="a" style="left:155px;top:766px" width="19" height="19" viewBox="0 0 19 19"><path d="M9.5 0L13.6 4.2H10.6V8.4H14.8V5.4L19 9.5L14.8 13.6V10.6H10.6V14.8H13.6L9.5 19L5.4 14.8H8.4V10.6H4.2V13.6L0 9.5L4.2 5.4V8.4H8.4V4.2H5.4z" fill="#333"/></svg>

<div class="a" style="left:87px;top:814px;font-size:14px;color:#333;line-height:20px;white-space:nowrap">Showing 1 to 7 of 7 rows. Idle hosts not listed.</div>
<div class="a" style="left:87px;top:864px;width:1033px;height:1px;background:#eee"></div>
<div class="a ft" style="left:102px;top:885px">ntopng Community Edition v.3.6.190215</div>
<div class="a ft" style="left:102px;top:905px">User <span class="bdg" style="background:#428bca">admin</span> Interface <span class="bdg" style="background:#428bca">hn1.20</span></div>
<div class="a" style="left:446px;top:885px;width:143px;height:20px;background:#f5f5f5;border-radius:4px;box-shadow:inset 0 1px 2px rgba(0,0,0,.1)"></div>
<div class="a" style="left:447px;top:888px;font-size:12px;color:#fff;line-height:14px">0%</div>
<div class="a" style="left:483px;top:909px;font-size:12px;color:#333;line-height:14px;white-space:nowrap">0 bps [0 pps]</div>
<svg class="a" style="left:603px;top:889px" width="17" height="34" viewBox="0 0 17 34">
 <path d="M4 13a3.5 3.5 0 0 1-.5-7A5 5 0 0 1 13 4.5a4 4 0 0 1 .5 8.5z" fill="#428bca"/><path d="M8.5 5l-3 3h2v3h2V8h2z" fill="#fff"/>
 <path d="M4 33a3.5 3.5 0 0 1-.5-7A5 5 0 0 1 13 24.5a4 4 0 0 1 .5 8.5z" fill="#428bca"/><path d="M8.5 31l-3-3h2v-3h2v3h2z" fill="#fff"/>
</svg>
<svg class="a" style="left:622px;top:884px" width="66" height="40" viewBox="0 0 66 40">
 <path d="M50.9 16.5L54.5 1.6L57.5 16.3L61.5 12.6L65 16.5Z" fill="#d0e0f8"/>
 <path d="M50.9 22.4L54.5 37.5L57.5 23L61.5 28.5L65 22.4Z" fill="#8fe07c"/>
 <path d="M1 16.5H50.9L54.5 1.6L57.5 16.3L61.5 12.6L65 16.5" fill="none" stroke="#4a8af4" stroke-width="1"/>
 <path d="M1 22.4H50.9L54.5 37.5L57.5 23L61.5 28.5L65 22.4" fill="none" stroke="#4a8af4" stroke-width="1"/>
</svg>
<div class="a lnk" style="left:691px;top:886px">0 bps</div>
<div class="a lnk" style="left:691px;top:907px">0 bps</div>
<svg class="a" style="left:795px;top:889px" width="12" height="12" viewBox="0 0 12 12"><circle cx="6" cy="6" r="5" fill="none" stroke="#222" stroke-width="1.6"/><path d="M6 3v3.3h2.5" fill="none" stroke="#222" stroke-width="1.4"/></svg>
<div class="a" style="left:811px;top:889px;font-size:12.2px;color:#333;line-height:14px;white-space:nowrap">14:36:54 +0200 | Uptime: 05:22:31</div>
<div class="a bdg2" style="left:798px;top:908px;width:32px;background:#5cb85c">4 <svg width="11" height="9" viewBox="0 0 11 9" style="vertical-align:-1px"><rect x="1.8" y="1" width="7.4" height="5" fill="none" stroke="#fff" stroke-width="1.1"/><path d="M0 7.8h11" stroke="#fff" stroke-width="1.3"/></svg></div>
<div class="a bdg2" style="left:834px;top:908px;width:33px;background:#999">3 <svg width="11" height="9" viewBox="0 0 11 9" style="vertical-align:-1px"><rect x="1.8" y="1" width="7.4" height="5" fill="none" stroke="#fff" stroke-width="1.1"/><path d="M0 7.8h11" stroke="#fff" stroke-width="1.3"/></svg></div>
<div class="a bdg2" style="left:871px;top:908px;width:62px;background:#999">4 Devices</div>
<div class="a bdg2" style="left:937px;top:908px;width:57px;background:#999">11 Flows</div>
<div class="a" style="left:1144px;top:776px;width:2px;height:19px;background:#000"></div>
<div class="a" style="left:1145px;top:779px;width:1px;height:13px;background:#fff"></div>

</body></html>
